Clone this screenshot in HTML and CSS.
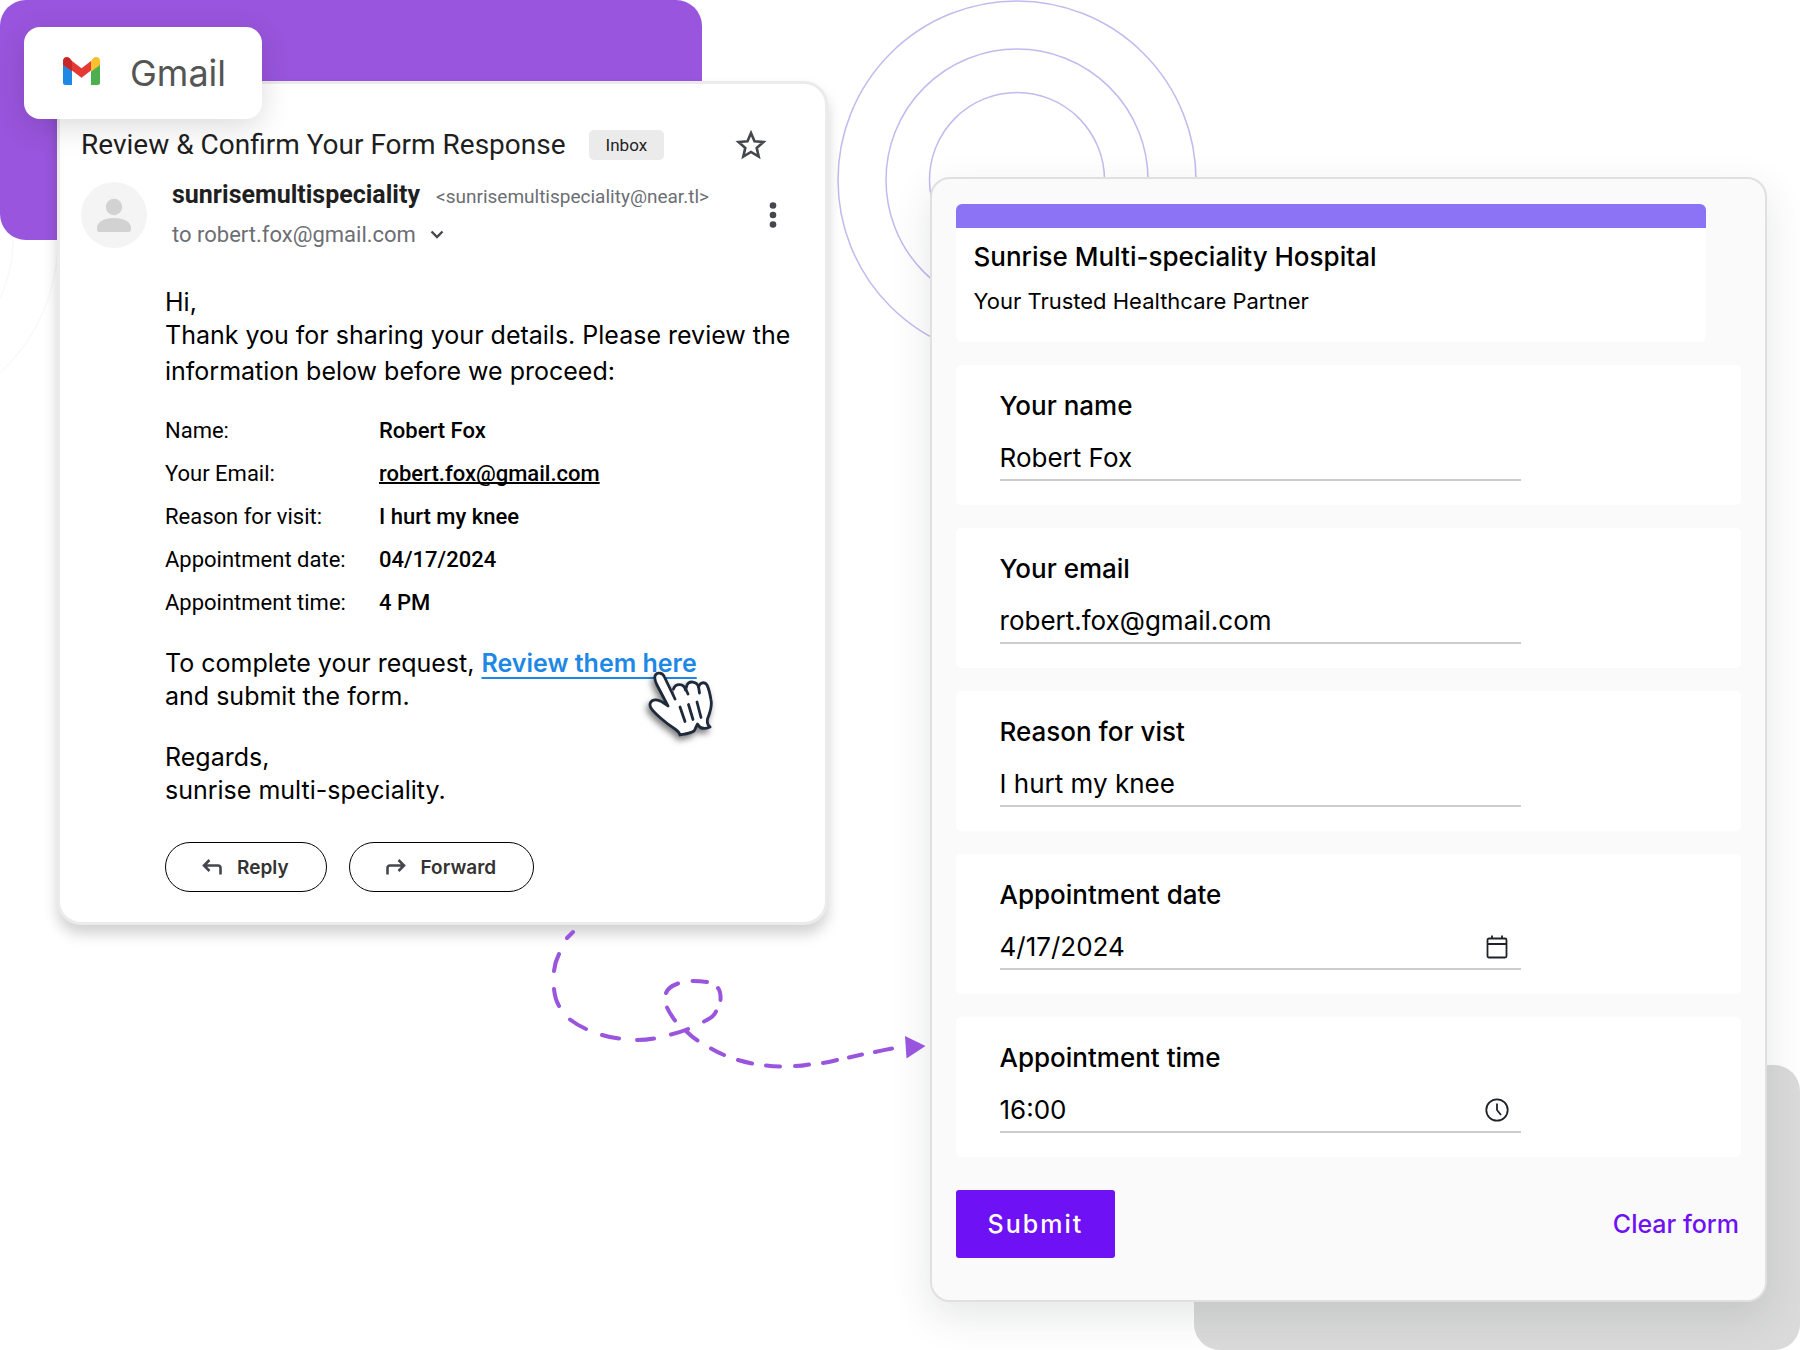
FILE: index.html
```html
<!DOCTYPE html>
<html lang="en">
<head>
    <meta charset="UTF-8">
    <meta name="viewport" content="width=device-width, initial-scale=1.0">
    <title>Review &amp; Confirm Your Form Response</title>
    <link rel="stylesheet" href="styles.css">
</head>
<body>
    <div class="page">
        <!-- background shapes -->
        <svg class="rings rings-left" width="60" height="182" viewBox="0 0 60 182">
            <circle cx="-123" cy="0" r="181"/>
            <circle cx="-123" cy="0" r="136"/>
        </svg>
        <div class="block-purple"></div>
        <div class="block-grey"></div>
        <svg class="rings" width="362" height="362" viewBox="0 0 362 362">
            <circle cx="181" cy="180" r="179"/>
            <circle cx="181" cy="180" r="131"/>
            <circle cx="181" cy="180" r="87.5"/>
        </svg>

        <main class="columns">
            <section class="mail">
                <div class="mail-top">
                    <h1 class="subject">Review &amp; Confirm Your Form Response</h1>
                    <span class="tag">Inbox</span>
                    <button class="icon-btn star" aria-label="Star">
                        <svg width="32" height="30" viewBox="0 0 32 30"><path d="M16 3l3.500 8.200 8.900.8-6.700 5.900 2 8.700L16 22l-7.700 4.600 2-8.700-6.700-5.900 8.900-.8z" fill="none" stroke="#44474e" stroke-width="2.6"/></svg>
                    </button>
                </div>
                <div class="mail-from">
                    <svg class="avatar" width="66" height="66" viewBox="0 0 66 66">
                        <circle cx="33" cy="33" r="33" fill="#f4f4f4"/>
                        <circle cx="33" cy="25" r="8.200" fill="#d2d2d2"/>
                        <path d="M16 46c0-6 7-10 17-10s17 4 17 10v2q0 2-2.500 2h-29q-2.500 0-2.500-2z" fill="#d2d2d2"/>
                    </svg>
                    <div class="from-text">
                        <div class="from-line">
                            <strong class="sender">sunrisemultispeciality</strong>
                            <span class="address">&lt;sunrisemultispeciality@near.tl&gt;</span>
                        </div>
                        <div class="to-line">
                            <span>to robert.fox@gmail.com</span>
                            <svg width="14" height="10" viewBox="0 0 14 10"><path d="M1.500 1.500L7 7l5.500-5.500" fill="none" stroke="#44474e" stroke-width="2.400"/></svg>
                        </div>
                    </div>
                    <button class="icon-btn more" aria-label="More">
                        <svg width="8" height="28" viewBox="0 0 8 28" fill="#44474e"><circle cx="4" cy="4.500" r="3.300"/><circle cx="4" cy="14" r="3.300"/><circle cx="4" cy="23.500" r="3.300"/></svg>
                    </button>
                </div>
                <div class="mail-body">
                    <p class="hi">Hi,</p>
                    <p class="lead">Thank you for sharing your details. Please review the information below before we proceed:</p>
                    <table class="details">
                        <tr><th>Name:</th><td>Robert Fox</td></tr>
                        <tr><th>Your Email:</th><td><a href="#">robert.fox@gmail.com</a></td></tr>
                        <tr><th>Reason for visit:</th><td>I hurt my knee</td></tr>
                        <tr><th>Appointment date:</th><td>04/17/2024</td></tr>
                        <tr><th>Appointment time:</th><td>4 PM</td></tr>
                    </table>
                    <p class="request">To complete your request, <a class="review" href="#">Review them here<svg class="hand" width="72" height="76" viewBox="0 0 72 76">
                        <g fill="#fff" stroke="#1e293b" stroke-width="2.800" stroke-linejoin="round" stroke-linecap="round">
                            <path d="M29 35L18.200 12.500C16 7.500 9 8 8.800 13.500C8.700 16 10 19 11 21L22 42C17 38 13.500 36 10 35.800C5 35.500 2.500 40 5 44C8 49 21 60 29 65C32 67 33.500 68 34 71C39 70 44 69.500 48 67C50 64 50 62 51.500 60C53.500 64 57 66 64 63C61 61 61 58 61.500 55C64 48 66.500 43 65 36C64 30 63 25 61 21C59 17.500 54 18 52.500 23C51 17 43 16.500 41 21L39.500 26C38 19 29.500 19 27.500 25"/>
                            <path d="M39.500 24.500L42 30M52.500 22.500L53.500 29M34 43L39 57.500M42.500 40.500L47 55.500M51 38L55 53.500" fill="none"/>
                        </g>
                    </svg></a><br>and submit the form.</p>
                    <p class="regards">Regards,<br>sunrise multi-speciality.</p>
                    <div class="mail-actions">
                        <button class="pill">
                            <svg width="20" height="18" viewBox="0 0 20 18"><path d="M7.500 2L2 7.500 7.500 13M2 7.500h14q2.500 0 2.500 2.500v6.500" fill="none" stroke="#44474e" stroke-width="2.600"/></svg>
                            Reply
                        </button>
                        <button class="pill">
                            <svg width="20" height="18" viewBox="0 0 20 18"><path d="M12.500 2L18 7.500 12.500 13M18 7.500H4q-2.500 0-2.500 2.500v6.500" fill="none" stroke="#44474e" stroke-width="2.600"/></svg>
                            Forward
                        </button>
                    </div>
                </div>
            </section>

            <form class="form-card">
                <header class="form-head">
                    <h2>Sunrise Multi-speciality Hospital</h2>
                    <p>Your Trusted Healthcare Partner</p>
                </header>
                <div class="field">
                    <label for="name">Your name</label>
                    <div class="control"><input id="name" type="text" value="Robert Fox"></div>
                </div>
                <div class="field">
                    <label for="email">Your email</label>
                    <div class="control"><input id="email" type="email" value="robert.fox@gmail.com"></div>
                </div>
                <div class="field">
                    <label for="reason">Reason for vist</label>
                    <div class="control"><input id="reason" type="text" value="I hurt my knee"></div>
                </div>
                <div class="field">
                    <label for="date">Appointment date</label>
                    <div class="control">
                        <input id="date" type="text" value="4/17/2024">
                        <svg width="24" height="24" viewBox="0 0 24 24" fill="none" stroke="#1f2328" stroke-width="1.800"><rect x="2.500" y="3.500" width="19" height="19" rx="1.500"/><path d="M2.500 9h19M7 .5v3M17 .5v3"/></svg>
                    </div>
                </div>
                <div class="field">
                    <label for="time">Appointment time</label>
                    <div class="control">
                        <input id="time" type="text" value="16:00">
                        <svg width="24" height="24" viewBox="0 0 24 24" fill="none" stroke="#1f2328" stroke-width="1.800"><circle cx="12" cy="12" r="10.700"/><path d="M12 5.500v6.500l4 5"/></svg>
                    </div>
                </div>
                <div class="form-actions">
                    <button class="submit" type="submit">Submit</button>
                    <button class="clear" type="reset">Clear form</button>
                </div>
            </form>
        </main>

        <!-- dashed arrow between the cards -->
        <svg class="arrow" width="380" height="145" viewBox="550 925 380 145">
            <g fill="none" stroke="#9955dd" stroke-width="4" stroke-linecap="round">
                <path d="M573 932L567 938M559 954Q555 962 554 971M554 989Q555 999 559 1006M570 1019.500Q577 1025 586 1029M602 1035Q610 1037.500 619 1038.500M637 1040Q646 1040 654 1038.500M671 1034.500Q681 1032 688 1029"/>
                <path d="M704 1021.500Q714 1017 716 1011.500M720.500 1000Q721 992 718 988M707 982Q700 981 692.500 981M678 983.500Q668 987 666 993M667 1007.500Q670 1014 675 1020.500M686 1031Q692 1037 697.500 1040.500"/>
                <path d="M711 1048.500Q717 1052 724 1055M738 1060Q745 1062 752 1063.500M766 1065.500Q773 1066.500 780 1066.500M795 1066Q802 1066 809 1064.500M823 1063Q830 1062 837 1060M849 1057.500L862 1054.500M875 1052Q884 1050 892 1048.500"/>
            </g>
            <path d="M905 1036L925.500 1046L906.500 1058.500z" fill="#9955dd"/>
        </svg>

        <div class="gmail">
            <svg width="37" height="32" viewBox="0 0 37 32">
                <path d="M0 7.500l9 6.800V28H2.500Q0 28 0 25.500z" fill="#1e88e5"/>
                <path d="M37 7.500l-9 6.800V28h6.500Q37 28 37 25.500z" fill="#4caf50"/>
                <path d="M9 4l9.500 7.200L28 4v9.500l-9.500 7.200L9 13.500z" fill="#e53935"/>
                <path d="M0 3.600v4.400l9 6.500V4L6.600 1.100C5.800.4 4.800 0 3.700 0 1.600 0 0 1.600 0 3.600z" fill="#c62828"/>
                <path d="M37 3.600v4.400l-9 6.500V4l2.400-2.900C31.200.4 32.200 0 33.300 0 35.400 0 37 1.600 37 3.600z" fill="#fbc02d"/>
            </svg>
            <span>Gmail</span>
        </div>
    </div>
</body>
</html>
```

FILE: styles.css
```css
* {
    box-sizing: border-box;
}
body {
    margin: 0;
    background-color: #fff;
    color: #000;
    font-family: Inter, "Liberation Sans", sans-serif;
}
h1, h2, p {
    margin: 0;
    font-weight: 400;
}
button {
    font-family: inherit;
    cursor: pointer;
}
svg {
    display: block;
    flex: none;
}
.page {
    position: relative;
    min-height: 100vh;
    overflow: hidden;
}

/* background */
.block-purple {
    position: absolute;
    top: 0;
    left: 0;
    width: 39%;
    height: 240px;
    border-radius: 26px;
    background-color: #9955dd;
}
.block-grey {
    position: absolute;
    right: 0;
    bottom: 0;
    width: 606px;
    height: 285px;
    border-radius: 26px;
    background-color: #dadada;
}
.rings {
    position: absolute;
    top: 0;
    left: 836px;
    fill: none;
    stroke: #c4b9ef;
    stroke-width: 1.5;
}
.rings-left {
    top: 240px;
    left: 0;
    stroke: #f9f9f9;
}
.arrow {
    position: absolute;
    top: 925px;
    left: 550px;
}

.columns {
    position: relative;
    display: flex;
    align-items: flex-start;
    gap: 102px;
    padding: 81px 33px 48px 57px;
}

/* gmail label */
.gmail {
    position: absolute;
    top: 27px;
    left: 24px;
    display: flex;
    align-items: center;
    gap: 30px;
    height: 92px;
    padding: 0 36px 0 39px;
    border-radius: 16px;
    background-color: #fff;
    box-shadow: 0 8px 30px rgba(0, 0, 0, 0.14);
    color: #555;
    font-size: 36px;
}

/* mail card */
.mail {
    flex: 771 1 0;
    min-width: 0;
    padding: 43px 20px 30px 21px;
    border: 3px solid #ebebeb;
    border-radius: 24px;
    background-color: #fff;
    box-shadow: 0 9px 14px rgba(0, 0, 0, 0.18);
}
.mail-top, .mail-from {
    display: flex;
    align-items: center;
    font-family: Roboto, "Liberation Sans", sans-serif;
}
.subject {
    color: #1f1f1f;
    font-size: 28px;
    line-height: 36px;
}
.tag {
    margin-left: 23px;
    padding: 0 17px;
    border-radius: 5px;
    background-color: #ebebeb;
    color: #1f1f1f;
    font-size: 17px;
    line-height: 30px;
}
.icon-btn {
    margin-left: auto;
    padding: 0;
    border: 0;
    background: none;
}
.star {
    margin-right: 38px;
}
.more {
    margin-right: 28px;
}
.mail-from {
    margin-top: 13px;
}
.from-text {
    margin-left: 25px;
}
.from-line {
    display: flex;
    align-items: baseline;
    gap: 16px;
    line-height: 38px;
}
.sender {
    color: #1f1f1f;
    font-size: 25px;
}
.address {
    color: #6b6e73;
    font-size: 19px;
}
.to-line {
    display: flex;
    align-items: center;
    gap: 14px;
    color: #6b6e73;
    font-size: 22px;
    line-height: 38px;
}
.mail-body {
    padding: 33px 0 0 84px;
    font-size: 25px;
    line-height: 33px;
}
.hi {
    line-height: 30px;
}
.lead {
    line-height: 36px;
}
.details {
    margin: 20px 0 23px;
    border-collapse: collapse;
    font-family: Roboto, "Liberation Sans", sans-serif;
    font-size: 22px;
    line-height: 43px;
}
.details th {
    width: 214px;
    padding: 0;
    font-weight: 400;
    text-align: left;
}
.details td {
    padding: 0;
    font-weight: 500;
}
.details a {
    color: inherit;
    text-decoration-thickness: 2px;
    text-decoration-skip-ink: none;
}
.review {
    position: relative;
    color: #1e88e5;
    font-weight: 600;
    text-decoration: underline 2px;
    text-decoration-skip-ink: none;
    text-underline-offset: 5px;
}
.hand {
    position: absolute;
    top: 16px;
    right: -21px;
    filter: drop-shadow(-2px 4px 3px rgba(0, 0, 0, 0.5));
}
.regards {
    margin-top: 28px;
}
.mail-actions {
    display: flex;
    gap: 22px;
    margin-top: 35px;
}
.pill {
    display: flex;
    align-items: center;
    gap: 15px;
    height: 50px;
    padding: 0 37px 0 36px;
    border: 1px solid #000;
    border-radius: 25px;
    background-color: #fff;
    color: #333;
    font-size: 19px;
    font-weight: 600;
}

/* form card */
.form-card {
    flex: 837 1 0;
    min-width: 0;
    margin-top: 96px;
    padding: 25px 24px 42px;
    border: 2px solid #e0e0e0;
    border-radius: 20px;
    background-color: #fafafa;
    box-shadow: 0 14px 40px rgba(40, 50, 60, 0.12);
}
.form-head {
    width: 750px;
    max-width: 100%;
    height: 138px;
    padding: 11px 18px 0;
    border-top: 24px solid #8c72f5;
    border-radius: 6px;
    background-color: #fff;
}
.form-head h2 {
    font-size: 26px;
    font-weight: 500;
    line-height: 36px;
}
.form-head p {
    margin-top: 9px;
    font-size: 22px;
    line-height: 34px;
}
.field {
    margin-top: 23px;
    padding: 23px 44px 24px;
    border-radius: 5px;
    background-color: #fff;
}
.field label {
    display: block;
    font-size: 26px;
    font-weight: 500;
    line-height: 36px;
}
.control {
    display: flex;
    align-items: center;
    width: 521px;
    max-width: 100%;
    height: 57px;
    padding: 12px 12px 0 0;
    border-bottom: 2px solid #ccc;
}
.control input {
    flex: 1;
    min-width: 0;
    padding: 0;
    border: 0;
    outline: 0;
    background: none;
    color: #000;
    font-family: inherit;
    font-size: 26px;
}
.form-actions {
    display: flex;
    align-items: center;
    justify-content: space-between;
    margin-top: 33px;
}
.submit {
    height: 68px;
    padding: 0 32px;
    border: 0;
    border-radius: 3px;
    background-color: #6e11f4;
    color: #fff;
    font-size: 25px;
    font-weight: 500;
    letter-spacing: 2px;
}
.clear {
    padding: 0 2px;
    border: 0;
    background: none;
    color: #6e11f4;
    font-size: 25px;
    font-weight: 500;
}
```
